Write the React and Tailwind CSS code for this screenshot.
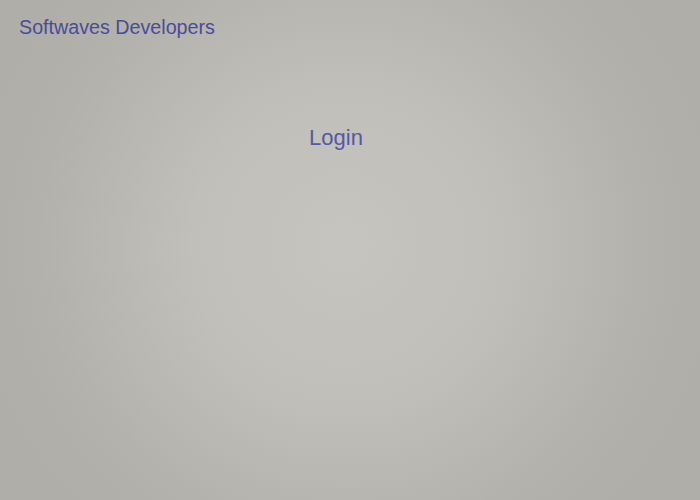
export default function App() {
  return (
    <div
      className="w-[700px] h-[500px] overflow-hidden bg-[radial-gradient(circle_at_345px_245px,#c5c4be_0%,#c0bfb9_35%,#b2b1ab_70%,#afaea8_85%)]"
      style={{ fontFamily: '"Liberation Sans", Arial, sans-serif' }}
    >
      <div className="pt-[15px] pl-[19px] text-[19.7px] leading-[24px] text-[#4a4c98]">Softwaves Developers</div>
      <div className="mt-[86px] flex justify-center pr-[28px]">
        <div className="text-[22px] leading-[26px] text-[#5558a6]">Login</div>
      </div>
    </div>
  );
}
